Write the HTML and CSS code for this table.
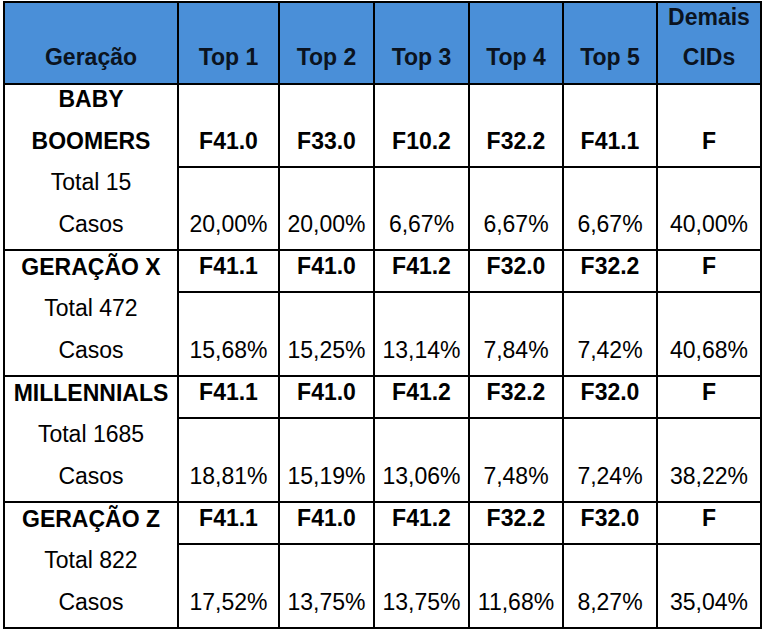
FILE: index.html
```html
<!DOCTYPE html>
<html lang="pt">
<head>
<meta charset="utf-8">
<title>Gerações</title>
<link rel="stylesheet" href="styles.css">
</head>
<body>
<div class="table">
  <div class="cell head"><span>Geração</span></div>
  <div class="cell head"><span>Top 1</span></div>
  <div class="cell head"><span>Top 2</span></div>
  <div class="cell head"><span>Top 3</span></div>
  <div class="cell head"><span>Top 4</span></div>
  <div class="cell head"><span>Top 5</span></div>
  <div class="cell head"><span>Demais</span><span>CIDs</span></div>

  <div class="cell gen span2"><b>BABY</b><b>BOOMERS</b><span>Total 15</span><span>Casos</span></div>
  <div class="cell code">F41.0</div>
  <div class="cell code">F33.0</div>
  <div class="cell code">F10.2</div>
  <div class="cell code">F32.2</div>
  <div class="cell code">F41.1</div>
  <div class="cell code">F</div>
  <div class="cell pct">20,00%</div>
  <div class="cell pct">20,00%</div>
  <div class="cell pct">6,67%</div>
  <div class="cell pct">6,67%</div>
  <div class="cell pct">6,67%</div>
  <div class="cell pct">40,00%</div>

  <div class="cell gen span2"><b>GERAÇÃO X</b><span>Total 472</span><span>Casos</span></div>
  <div class="cell code">F41.1</div>
  <div class="cell code">F41.0</div>
  <div class="cell code">F41.2</div>
  <div class="cell code">F32.0</div>
  <div class="cell code">F32.2</div>
  <div class="cell code">F</div>
  <div class="cell pct">15,68%</div>
  <div class="cell pct">15,25%</div>
  <div class="cell pct">13,14%</div>
  <div class="cell pct">7,84%</div>
  <div class="cell pct">7,42%</div>
  <div class="cell pct">40,68%</div>

  <div class="cell gen span2"><b>MILLENNIALS</b><span>Total 1685</span><span>Casos</span></div>
  <div class="cell code">F41.1</div>
  <div class="cell code">F41.0</div>
  <div class="cell code">F41.2</div>
  <div class="cell code">F32.2</div>
  <div class="cell code">F32.0</div>
  <div class="cell code">F</div>
  <div class="cell pct">18,81%</div>
  <div class="cell pct">15,19%</div>
  <div class="cell pct">13,06%</div>
  <div class="cell pct">7,48%</div>
  <div class="cell pct">7,24%</div>
  <div class="cell pct">38,22%</div>

  <div class="cell gen span2"><b>GERAÇÃO Z</b><span>Total 822</span><span>Casos</span></div>
  <div class="cell code">F41.1</div>
  <div class="cell code">F41.0</div>
  <div class="cell code">F41.2</div>
  <div class="cell code">F32.2</div>
  <div class="cell code">F32.0</div>
  <div class="cell code">F</div>
  <div class="cell pct">17,52%</div>
  <div class="cell pct">13,75%</div>
  <div class="cell pct">13,75%</div>
  <div class="cell pct">11,68%</div>
  <div class="cell pct">8,27%</div>
  <div class="cell pct">35,04%</div>
</div>
</body>
</html>
```

FILE: styles.css
```css
html, body {
  margin: 0;
  padding: 0;
  background: #ffffff;
}

body {
  padding: 1px 0 0 3px;
  font-family: "Liberation Sans", Arial, sans-serif;
  font-size: 23px;
  color: #000;
}

.table {
  display: grid;
  width: max-content;
  grid-template-columns: 172px 99px 93px 93px 92px 92px 102px;
  grid-template-rows: 80px 81px 81px 40px 82px 40px 82px 40px 82px;
  gap: 2px;
  padding: 2px;
  background: #000;
}

.cell {
  background: #fff;
  display: flex;
  flex-direction: column;
  justify-content: flex-end;
  align-items: center;
  text-align: center;
  line-height: 41.5px;
  padding-bottom: 4px;
  box-sizing: border-box;
  white-space: nowrap;
  min-height: 0;
}

.head {
  background: #4a8fd8;
  color: #0b1320;
  font-weight: bold;
  line-height: 40px;
  padding-bottom: 6px;
}

.span2 {
  grid-row: span 2;
}

.gen b {
  font-weight: bold;
}

.code {
  font-weight: bold;
}
```
